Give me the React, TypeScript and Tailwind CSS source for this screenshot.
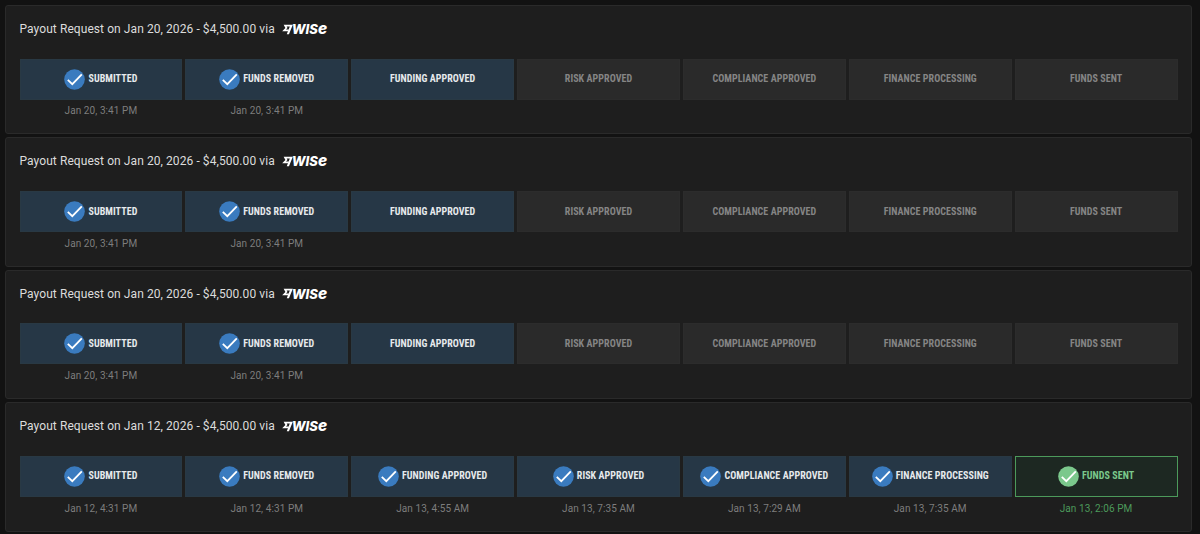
import React from "react";
import clsx from "clsx";

type Payout = {
  date: string;
  amount: string;
  // How many steps are completed, with the time of each
  completed: string[];
};

const steps = [
  "Submitted",
  "Funds Removed",
  "Funding Approved",
  "Risk Approved",
  "Compliance Approved",
  "Finance Processing",
  "Funds Sent",
];

const payouts: Payout[] = [
  { date: "Jan 20, 2026", amount: "$4,500.00", completed: ["Jan 20, 3:41 PM", "Jan 20, 3:41 PM"] },
  { date: "Jan 20, 2026", amount: "$4,500.00", completed: ["Jan 20, 3:41 PM", "Jan 20, 3:41 PM"] },
  { date: "Jan 20, 2026", amount: "$4,500.00", completed: ["Jan 20, 3:41 PM", "Jan 20, 3:41 PM"] },
  {
    date: "Jan 12, 2026",
    amount: "$4,500.00",
    completed: [
      "Jan 12, 4:31 PM",
      "Jan 12, 4:31 PM",
      "Jan 13, 4:55 AM",
      "Jan 13, 7:35 AM",
      "Jan 13, 7:29 AM",
      "Jan 13, 7:35 AM",
      "Jan 13, 2:06 PM",
    ],
  },
];

const WiseLogo = () => (
  <span className="ml-[7px] flex h-[12px] items-center text-white">
    <svg width="11" height="11" viewBox="0 0 12 11" fill="currentColor">
      <path d="M1.8 0.2H11.8L7.6 10.6H5.2L8.5 2.3H5.1L6 3.8L4.3 5.5H7.2L6.4 7.4H0.2L3.7 3.8Z" />
    </svg>
    <span className="-ml-px flex items-baseline font-[Inter,sans-serif] text-[13px] leading-[12px] font-extrabold italic tracking-[0.05px]">
      WIS<span className="text-[15.5px] leading-[12px]">e</span>
    </span>
  </span>
);

const CheckCircle = ({ final }: { final: boolean }) => (
  <svg width="21" height="21" viewBox="0 0 21 21" className="shrink-0">
    <circle cx="10.5" cy="10.5" r="10.3" fill={final ? "#7bc88c" : "#3a7bbf"} />
    <path d="M3.8 10.8L8.3 15.2L17.8 5.4" fill="none" stroke="#fff" strokeWidth="1.8" />
  </svg>
);

const PayoutCard = ({ payout }: { payout: Payout }) => {
  const current = payout.completed.length;

  return (
    <div className="h-[129.4px] rounded-[3px] border border-[#2a2a2a] bg-[#1e1e1e] px-[13.5px] pt-[15px]">
      <div className="flex h-4 items-center text-[12px] leading-4 text-[#dcdcdc]">
        <span className="whitespace-nowrap tracking-[0.075px]">
          Payout Request on {payout.date} - {payout.amount} via
        </span>
        <WiseLogo />
      </div>

      <div className="mt-[21.7px] grid grid-cols-7 gap-[3px]">
        {steps.map((step, index) => {
          const done = index < current;
          const final = done && index === steps.length - 1;
          return (
            <div key={step} className="text-center">
              <div
                className={clsx(
                  "flex h-[41px] items-center justify-center gap-[3px] border",
                  final && "border-[#4c9a5b] bg-[#1d2822] text-[#7bc88c]",
                  !final && index <= current && "border-[#293944] bg-[#263746] text-[#e6eaed]",
                  index > current && "border-[#2c2c2c] bg-[#2a2a2a] text-[#858585]"
                )}
              >
                {done && <CheckCircle final={final} />}
                <span className="font-['Roboto_Condensed',Roboto,sans-serif] text-[10px] leading-3 font-bold tracking-[0.06px] whitespace-nowrap uppercase [font-stretch:75%]">
                  {step}
                </span>
              </div>
              {done && (
                <div
                  className={clsx(
                    "mt-[3.8px] text-[10px] leading-4 tracking-[0.08px]",
                    final ? "text-[#4c9a5b]" : "text-[#7d7d7d]"
                  )}
                >
                  {payout.completed[index]}
                </div>
              )}
            </div>
          );
        })}
      </div>
    </div>
  );
};

const App = () => {
  return (
    <div className="flex h-[534px] flex-col gap-[3px] overflow-hidden bg-[#121212] pt-[5px] pr-[8px] pl-[5px] font-[Roboto,sans-serif]">
      {payouts.map((payout, index) => (
        <PayoutCard key={index} payout={payout} />
      ))}
    </div>
  );
};

export default App;
